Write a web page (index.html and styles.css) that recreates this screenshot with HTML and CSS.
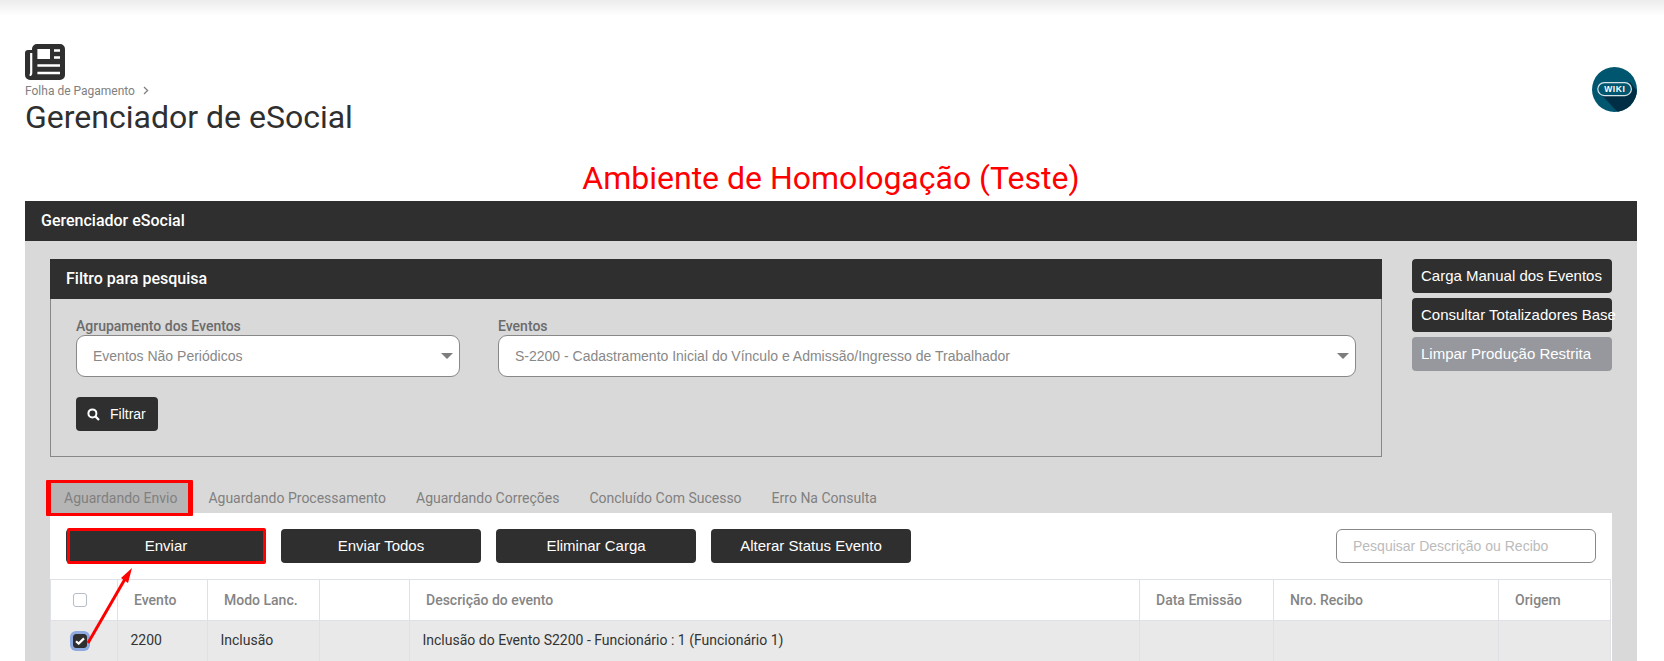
FILE: index.html
```html
<!DOCTYPE html>
<html lang="pt-BR">

<head>
    <meta charset="utf-8">
    <title>Gerenciador de eSocial</title>
    <link rel="stylesheet" href="styles.css">
</head>

<body>
    <div class="top-shadow"></div>
    <div class="page">
        <header class="page-head">
            <div class="page-title">
                <svg class="page-icon" width="40" height="36" viewBox="0 0 40 36">
                    <path fill="#2f2f2f" d="M12 0h23a5 5 0 0 1 5 5v26a5 5 0 0 1-5 5H5a5 5 0 0 1-5-5V9a3 3 0 0 1 3-3h4V5a5 5 0 0 1 5-5z" />
                    <path fill="none" stroke="#fff" stroke-width="2.2" d="M6.2 9v20q0 2-1.6 2" />
                    <rect fill="#fff" x="12.4" y="5" width="12.6" height="10" />
                    <path fill="none" stroke="#fff" stroke-width="2.4" d="M29 6.5h6M29 13.5h6M12.4 21.5h22.6M12.4 29h22.6" />
                </svg>
                <div class="breadcrumb">Folha de Pagamento
                    <svg class="breadcrumb-sep" width="6" height="9" viewBox="0 0 6 9">
                        <path d="M1 1l3.6 3.5L1 8" fill="none" stroke="#808080" stroke-width="1.3" />
                    </svg>
                </div>
                <h1>Gerenciador de eSocial</h1>
            </div>
            <svg class="wiki" width="45" height="45" viewBox="0 0 45 45">
                <clipPath id="wikiClip">
                    <circle cx="22.5" cy="22.5" r="22.5" />
                </clipPath>
                <circle cx="22.5" cy="22.5" r="22.5" fill="#00566f" />
                <path clip-path="url(#wikiClip)" fill="#002f45" d="M9 27L38 15L50 30L40 50H30z" />
                <rect x="5.8" y="15.6" width="33.6" height="13" rx="6.5" fill="#00566f" stroke="#d5e2e7" stroke-width="1.2" />
                <text x="22.8" y="25.4" text-anchor="middle" class="wiki-text">WIKI</text>
            </svg>
        </header>

        <h2 class="env-title">Ambiente de Homologação (Teste)</h2>

        <div class="panel-head">Gerenciador eSocial</div>
        <main class="panel">
            <div class="filter-row">
                <section class="filter">
                    <div class="filter-head">Filtro para pesquisa</div>
                    <div class="filter-body">
                        <div class="fields">
                            <div class="field">
                                <label>Agrupamento dos Eventos</label>
                                <div class="select">Eventos Não Periódicos</div>
                            </div>
                            <div class="field">
                                <label>Eventos</label>
                                <div class="select">S-2200 - Cadastramento Inicial do Vínculo e Admissão/Ingresso de Trabalhador</div>
                            </div>
                        </div>
                        <button class="btn btn-filter" type="button">
                            <svg width="13" height="13" viewBox="0 0 13 13">
                                <circle cx="5.4" cy="5.4" r="4" fill="none" stroke="#fff" stroke-width="2" />
                                <path d="M8.4 8.4L12 12" stroke="#fff" stroke-width="2.2" />
                            </svg>
                            Filtrar
                        </button>
                    </div>
                </section>
                <div class="side-actions">
                    <button class="btn btn-side" type="button">Carga Manual dos Eventos</button>
                    <button class="btn btn-side" type="button">Consultar Totalizadores Base</button>
                    <button class="btn btn-side btn-muted" type="button">Limpar Produção Restrita</button>
                </div>
            </div>

            <nav class="tabs">
                <a class="tab tab-active">Aguardando Envio</a>
                <a class="tab">Aguardando Processamento</a>
                <a class="tab">Aguardando Correções</a>
                <a class="tab">Concluído Com Sucesso</a>
                <a class="tab">Erro Na Consulta</a>
            </nav>

            <section class="tab-content">
                <div class="toolbar">
                    <button class="btn btn-action btn-marked" type="button">Enviar</button>
                    <button class="btn btn-action" type="button">Enviar Todos</button>
                    <button class="btn btn-action" type="button">Eliminar Carga</button>
                    <button class="btn btn-action" type="button">Alterar Status Evento</button>
                    <input class="search" type="text" placeholder="Pesquisar Descrição ou Recibo">
                </div>
                <table class="events">
                    <colgroup>
                        <col class="col-check">
                        <col class="col-event">
                        <col class="col-mode">
                        <col class="col-blank">
                        <col class="col-desc">
                        <col class="col-date">
                        <col class="col-receipt">
                        <col class="col-origin">
                    </colgroup>
                    <thead>
                        <tr>
                            <th class="cell-check"><span class="check"></span></th>
                            <th>Evento</th>
                            <th>Modo Lanc.</th>
                            <th></th>
                            <th>Descrição do evento</th>
                            <th>Data Emissão</th>
                            <th>Nro. Recibo</th>
                            <th>Origem</th>
                        </tr>
                    </thead>
                    <tbody>
                        <tr>
                            <td class="cell-check">
                                <span class="check check-on">
                                    <svg width="10" height="8" viewBox="0 0 10 8">
                                        <path d="M1 4.2L3.7 6.6L9 1.4" fill="none" stroke="#fff" stroke-width="2.2" />
                                    </svg>
                                </span>
                            </td>
                            <td>2200</td>
                            <td>Inclusão</td>
                            <td></td>
                            <td>Inclusão do Evento S2200 - Funcionário : 1 (Funcionário 1)</td>
                            <td></td>
                            <td></td>
                            <td></td>
                        </tr>
                    </tbody>
                </table>
            </section>
        </main>
    </div>

    <!-- seta vermelha da anotacao -->
    <svg class="arrow" width="60" height="85" viewBox="0 0 60 85">
        <path d="M3 76L40 12" stroke="#f00" stroke-width="3" />
        <path d="M47 1L36 11L43 16z" fill="#f00" />
    </svg>
</body>

</html>
```

FILE: styles.css
```css
* {
    box-sizing: border-box;
}

html,
body {
    height: 661px;
    overflow: hidden;
}

body {
    margin: 0;
    font-family: Roboto, Arial, sans-serif;
    background-color: #fff;
    color: #333;
    position: relative;
}

.top-shadow {
    height: 16px;
    background: linear-gradient(to bottom, #ececec, #fff);
}

.page {
    padding: 28px 25px 0 25px;
    margin-right: 2px;
}

.page-head {
    display: flex;
    justify-content: space-between;
    height: 111px;
}

.page-icon {
    display: block;
}

.breadcrumb {
    margin-top: 4px;
    font-size: 12px;
    line-height: 14px;
    color: #808080;
}

.breadcrumb-sep {
    margin-left: 5px;
}

h1 {
    margin: 0;
    font-size: 32px;
    font-weight: 400;
    line-height: 38px;
    color: #2f2f2f;
}

.wiki {
    margin-top: 23px;
}

.wiki-text {
    font-family: "Liberation Sans", Arial, sans-serif;
    font-size: 8.5px;
    font-weight: bold;
    letter-spacing: 0.6px;
    fill: #fff;
}

.env-title {
    margin: 0;
    height: 46px;
    font-size: 32px;
    font-weight: 400;
    line-height: 46px;
    text-align: center;
    color: #f00;
}

.panel-head,
.filter-head {
    height: 40px;
    padding-left: 16px;
    background-color: #2f2f2f;
    color: #fff;
    font-size: 16px;
    font-weight: 500;
    line-height: 39px;
}

.panel {
    padding: 18px 25px 0 25px;
    background-color: #d9d9d9;
}

.filter-row {
    display: flex;
    gap: 30px;
}

.filter {
    width: 1332px;
}

.filter-body {
    height: 158px;
    padding: 19px 25px 0 25px;
    border: 1px solid #888;
    border-top: none;
}

.fields {
    display: grid;
    grid-template-columns: 384px 858px;
    gap: 38px;
}

.field label {
    display: block;
    height: 17px;
    font-size: 14px;
    font-weight: 500;
    line-height: 17px;
    color: #6b6b6b;
}

.select {
    position: relative;
    height: 42px;
    padding-left: 16px;
    border: 1px solid #888;
    border-radius: 9px;
    background-color: #fff;
    font-family: "Liberation Sans", Arial, sans-serif;
    font-size: 14px;
    line-height: 40px;
    color: #888;
}

.select::after {
    content: '';
    position: absolute;
    top: 17px;
    right: 6px;
    border-top: 6px solid #7d7d7d;
    border-left: 6px solid transparent;
    border-right: 6px solid transparent;
}

.btn {
    height: 34px;
    padding: 0 0 2px;
    border: none;
    border-radius: 4px;
    background-color: #2f2f2f;
    color: #fff;
    font-family: "Liberation Sans", Arial, sans-serif;
    font-size: 14px;
    cursor: pointer;
}

.btn-filter {
    display: flex;
    align-items: center;
    gap: 10px;
    width: 82px;
    margin-top: 20px;
    padding: 0 0 0 11px;
}

.side-actions {
    display: flex;
    flex-direction: column;
    gap: 5px;
    width: 200px;
}

.btn-side {
    padding-left: 9px;
    text-align: left;
    white-space: nowrap;
    font-size: 15px;
}

.btn-muted {
    background-color: #96989e;
}

.tabs {
    display: flex;
    gap: 4px;
    height: 30px;
    margin: 26px 0 0 1px;
}

.tab {
    padding: 0 13px;
    font-size: 14px;
    line-height: 30px;
    color: #808080;
}

.tab-active {
    position: relative;
    margin-right: 3px;
    padding-right: 11px;
    background-color: #b5b5b5;
}

/* caixa vermelha da anotacao */
.tab-active::after,
.btn-marked::after {
    content: '';
    position: absolute;
    border-style: solid;
    border-color: #f00;
}

.tab-active::after {
    top: -3px;
    bottom: -3px;
    left: -5px;
    right: -5px;
    border-width: 3px 5px;
    border-radius: 1px;
}

.tab-content {
    background-color: #fff;
}

.toolbar {
    display: flex;
    gap: 15px;
    height: 66px;
    padding: 16px 16px 0 16px;
}

.btn-action {
    width: 200px;
    font-size: 15px;
}

.btn-marked {
    position: relative;
}

.btn-marked::after {
    top: -1px;
    bottom: -1px;
    left: 1px;
    right: 0;
    border-width: 3px;
    border-radius: 2px;
}

.search {
    width: 260px;
    height: 34px;
    margin-left: auto;
    padding: 0 16px;
    border: 1px solid #888;
    border-radius: 6px;
    font-family: "Liberation Sans", Arial, sans-serif;
    font-size: 14px;
}

.search::placeholder {
    color: #bbb;
}

.events {
    width: 1560px;
    border-collapse: collapse;
    table-layout: fixed;
    font-size: 14px;
}

.col-check {
    width: 67px;
}

.col-event {
    width: 90px;
}

.col-mode {
    width: 112px;
}

.col-blank {
    width: 90px;
}

.col-desc {
    width: 730px;
}

.col-date {
    width: 134px;
}

.col-receipt {
    width: 225px;
}

.col-origin {
    width: 112px;
}

.events th,
.events td {
    height: 41px;
    border: 1px solid #dee2e6;
    text-align: left;
}

.events th {
    padding: 0 0 0 16px;
    font-weight: 500;
    color: #858585;
}

.events td {
    padding: 0 0 2px 12.5px;
    background-color: #e9e9e9;
    color: #333;
}

.events .cell-check {
    padding: 0 0 0 22px;
}

.check {
    display: block;
    width: 14px;
    height: 14px;
    border: 1px solid #b5bcc5;
    border-radius: 3px;
    background-color: #fff;
}

.check-on {
    display: flex;
    align-items: center;
    justify-content: center;
    border-color: #2f2f2f;
    background-color: #2f2f2f;
    box-shadow: 0 0 0 3px #8ea9e0;
}

/* por cima do conteudo, aponta para o botao Enviar */
.arrow {
    position: absolute;
    left: 85px;
    top: 567px;
}
```
